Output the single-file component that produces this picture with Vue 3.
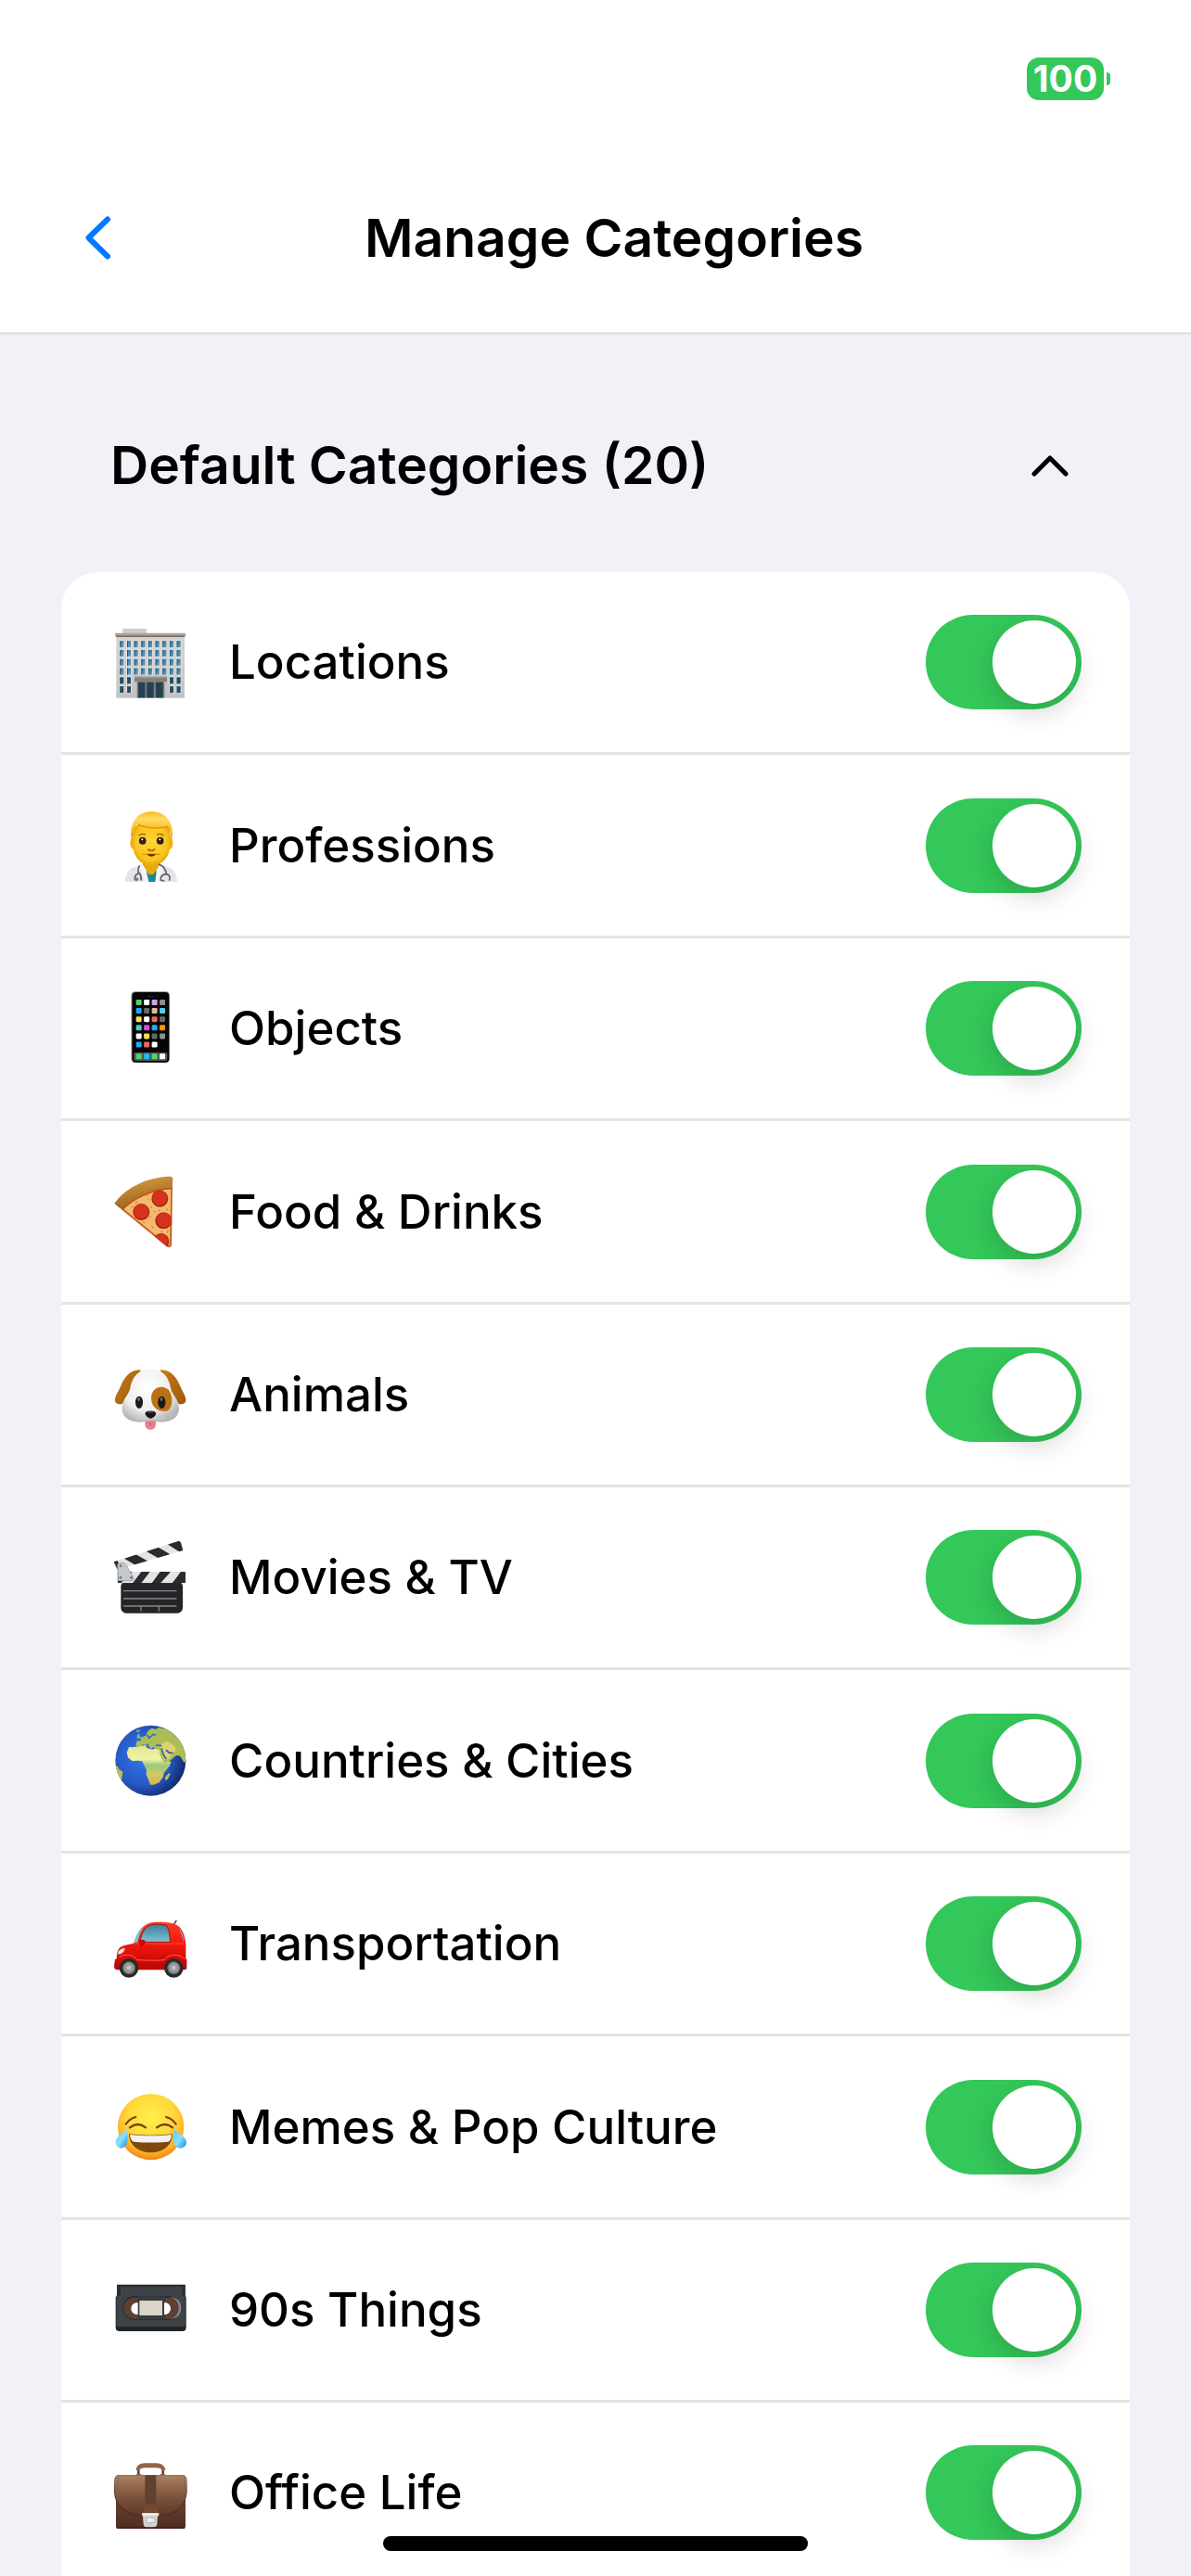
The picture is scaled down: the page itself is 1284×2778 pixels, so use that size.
<template>
  <div class="screen">
    <header class="header">
      <div class="status-bar">
        <div class="battery">
          <span class="level">100</span>
          <span class="cap"></span>
        </div>
      </div>
      <div class="nav">
        <button class="back" type="button" aria-label="Back">
          <svg viewBox="0 0 79 79">
            <path d="M50 19.5 29.5 39.5 50 59.5" />
          </svg>
        </button>
        <h1>Manage Categories</h1>
      </div>
    </header>

    <main class="content">
      <button class="section-header" type="button" :aria-expanded="expanded" @click="expanded = !expanded">
        <span>Default Categories (20)</span>
        <svg viewBox="0 0 66 66" :class="{ closed: !expanded }">
          <path d="M16 42 33 25 50 42" />
        </svg>
      </button>

      <ul v-if="expanded" class="list">
        <li v-for="item in categories" :key="item.id" class="row">
          <svg class="icon" :viewBox="`57 ${item.top} 252 252`" aria-hidden="true">
            <!-- Office building -->
            <g v-if="item.id === 'locations'">
              <defs>
                <linearGradient id="wall" x1="0" x2="0" y1="0" y2="1">
                  <stop offset="0" stop-color="#d9d0c7" />
                  <stop offset=".3" stop-color="#d3d1d0" />
                  <stop offset="1" stop-color="#c3c1c0" />
                </linearGradient>
                <linearGradient id="glass" x1="0" x2="0" y1="0" y2="1">
                  <stop offset="0" stop-color="#3c7fa6" />
                  <stop offset="1" stop-color="#5b9abd" />
                </linearGradient>
              </defs>
              <rect x="97" y="84" width="76" height="17" fill="#cfccca" />
              <rect x="76" y="108" width="221" height="200" fill="url(#wall)" />
              <rect x="72" y="98" width="228" height="9" rx="2" fill="#aaa39e" />
              <rect x="75" y="106" width="223" height="5" fill="#776e69" />
              <template v-for="r in 6" :key="r">
                <template v-for="c in 9" :key="c">
                  <g v-if="r < 5 || c < 3 || c > 7">
                    <rect :x="62 + c * 23" :y="90 + r * 29.4" width="18" height="27" fill="#dedede" />
                    <rect
                      :x="65 + c * 23"
                      :y="94 + r * 29.4"
                      width="12"
                      height="21"
                      :fill="r < 5 ? 'url(#glass)' : '#294a5e'"
                    />
                    <rect :x="65 + c * 23" :y="94 + r * 29.4" width="3" height="21" fill="#255775" />
                  </g>
                </template>
              </template>
              <rect x="135" y="239" width="105" height="17" fill="#85807e" />
              <rect x="135" y="239" width="105" height="4" fill="#a39e9b" />
              <rect x="143" y="256" width="89" height="52" fill="#787b7e" />
              <rect x="147" y="257" width="22" height="50" fill="#25404f" />
              <rect x="175" y="257" width="22" height="50" fill="#25404f" />
              <rect x="204" y="257" width="23" height="50" fill="#25404f" />
            </g>

            <!-- Doctor -->
            <g v-else-if="item.id === 'professions'">
              <defs>
                <radialGradient id="skin" cx=".5" cy=".45" r=".6">
                  <stop offset="0" stop-color="#ffd52e" />
                  <stop offset=".7" stop-color="#fbc41f" />
                  <stop offset="1" stop-color="#dd9a0c" />
                </radialGradient>
                <linearGradient id="hair" x1="0" x2="0" y1="0" y2="1">
                  <stop offset="0" stop-color="#f9bd1d" />
                  <stop offset=".3" stop-color="#ffdc66" />
                  <stop offset=".7" stop-color="#f7b91c" />
                  <stop offset="1" stop-color="#e39c0c" />
                </linearGradient>
              </defs>
              <path d="M104 300c2-28 12-43 34-49l26-10h50l26 10c22 6 31 21 33 49Z" fill="#e3e5ea" />
              <path d="M163 240h52l-6 60h-30Z" fill="#15899a" />
              <path d="M163 228h51v28l-20 21h-11l-20-21Z" fill="#e7a70f" />
              <path d="M160 243 172 260 181 300h-12l-19-48ZM217 243 207 260 202 300h12l15-48Z" fill="#f4f5f8" />
              <ellipse cx="130" cy="174" rx="9" ry="20" fill="#eeae16" />
              <ellipse cx="250" cy="174" rx="9" ry="20" fill="#eeae16" />
              <path d="M130 135c0-38 120-38 120 0v45c0 42-29 68-60 68s-60-26-60-68Z" fill="url(#skin)" />
              <path d="M124 155c-4-52 24-82 66-82s73 30 67 83l-6-1c2-18-2-28-9-34-32 7-74 6-98-10-8 12-13 25-14 44Z" fill="url(#hair)" />
              <path d="M145 113c24 14 65 17 97 8" fill="none" stroke="#ce8708" stroke-width="3" />
              <path d="M148 150q11-9 23-2M207 148q12-7 23 2" fill="none" stroke="#9a610c" stroke-width="4" />
              <ellipse cx="161" cy="167" rx="15" ry="12" fill="#fff1c9" />
              <ellipse cx="218" cy="167" rx="15" ry="12" fill="#fff1c9" />
              <circle cx="161" cy="167" r="12" fill="#3b1d08" />
              <circle cx="218" cy="167" r="12" fill="#3b1d08" />
              <circle cx="160" cy="163" r="3" fill="#fff" />
              <circle cx="217" cy="163" r="3" fill="#fff" />
              <path d="M179 195q10 8 21 0" fill="none" stroke="#b46d0a" stroke-width="5" stroke-linecap="round" />
              <path d="M160 211q29-3 59 0" fill="none" stroke="#d08a0e" stroke-width="3" />
              <path d="M174 211h31q-15 14-31 0Z" fill="#542306" />
              <path d="M151 249c-7 8-3 18-4 24-8 3-12 12-11 20M151 272c5 6 6 14 5 22M215 244c14 4 21 17 24 32M239 275c-14 0-22 9-19 19l10 3M239 275c10 3 12 12 9 19" fill="none" stroke="#5b5e65" stroke-width="5" stroke-linecap="round" />
              <circle cx="142" cy="292" r="6" fill="#7b7f86" />
            </g>

            <!-- Phone -->
            <g v-else-if="item.id === 'objects'">
              <rect x="124" y="57" width="125" height="232" rx="14" fill="#a6a8ac" />
              <rect x="127" y="60" width="120" height="227" rx="12" fill="#050505" />
              <rect x="177" y="71" width="20" height="5" rx="2" fill="#202226" />
              <circle cx="207" cy="73" r="3" fill="#17202a" />
              <rect x="133" y="255" width="108" height="27" rx="6" fill="#555" />
              <template v-for="(line, r) in phoneApps" :key="r">
                <rect
                  v-for="(color, c) in line"
                  :key="c"
                  :x="140 + c * 25.4"
                  :y="r === 6 ? 259 : 84 + r * 27.3"
                  width="18"
                  height="18"
                  rx="4"
                  :fill="color"
                />
              </template>
            </g>

            <!-- Pizza slice -->
            <g v-else-if="item.id === 'food'">
              <defs>
                <linearGradient id="crust" x1="0" x2=".4" y1="0" y2="1">
                  <stop offset="0" stop-color="#d9a34a" />
                  <stop offset=".5" stop-color="#bd8332" />
                  <stop offset="1" stop-color="#985b1b" />
                </linearGradient>
                <clipPath id="slice">
                  <path d="M93 174C130 133 190 106 256 102l-3 188q-4 12-13 5Z" />
                </clipPath>
              </defs>
              <path d="M91 173C130 128 195 98 258 98l-3 192q-5 13-16 5Z" fill="#c65d20" />
              <path d="M96 170C134 132 192 109 253 106l-4 182q-3 6-8 1Z" fill="#f3bb6e" />
              <g clip-path="url(#slice)">
                <path d="M93 176c44-44 98-66 162-71" fill="none" stroke="#c94716" stroke-width="7" />
                <path d="M139 156l3-6M179 143l3 1M188 165l2 4M183 202l3-5M192 230l4 4M188 249l3 1M164 216l4 2M240 174l3 4M214 180l3-3M221 246l4 2M243 243l-2 7M200 182l2 1M174 131l5-2M126 165l6 3" stroke="#d9883e" stroke-width="4" stroke-linecap="round" />
                <g fill="#a9230e">
                  <circle cx="157" cy="183" r="27" />
                  <circle cx="217" cy="140" r="27" />
                  <circle cx="229" cy="211" r="27" />
                  <circle cx="221" cy="278" r="26" />
                </g>
                <g fill="#d5321d">
                  <circle cx="157" cy="181" r="24" />
                  <circle cx="217" cy="138" r="24" />
                  <circle cx="230" cy="209" r="24" />
                  <circle cx="220" cy="277" r="23" />
                </g>
              </g>
              <path d="M70 155C106 104 179 69 250 68q10 1 9 11l-2 25C191 108 136 133 96 174q-12-4-26-19Z" fill="url(#crust)" />
            </g>

            <!-- Dog face -->
            <g v-else-if="item.id === 'animals'">
              <defs>
                <radialGradient id="fur" cx=".45" cy=".35" r=".65">
                  <stop offset="0" stop-color="#fff" />
                  <stop offset=".65" stop-color="#efefef" />
                  <stop offset="1" stop-color="#b9b8b7" />
                </radialGradient>
                <linearGradient id="ear" x1="0" x2="1" y1="0" y2="1">
                  <stop offset="0" stop-color="#c77b18" />
                  <stop offset="1" stop-color="#9e5809" />
                </linearGradient>
              </defs>
              <path d="M155 96c-35-2-53 24-66 55-8 19-17 28-17 43 0 10 9 14 20 13l26-12Z" fill="url(#ear)" />
              <path d="M218 96c35-2 53 24 66 55 8 19 17 28 17 43 0 10-9 14-20 13l-26-12Z" fill="url(#ear)" />
              <path d="M169 259h35v12c0 24-35 24-35 0Z" fill="#ee7c91" />
              <path d="M186 265v13" stroke="#cf536d" stroke-width="3" />
              <path d="M187 93c38 0 59 26 65 62 4 22 27 35 27 65 0 31-25 45-57 45-13 0-24-5-35-5s-22 5-35 5c-32 0-57-14-57-45 0-30 22-43 26-65 6-36 28-62 66-62Z" fill="url(#fur)" />
              <path d="M222 151c23 0 34 20 34 43 0 22-9 36-24 36-25 0-43-18-43-43 0-21 13-36 33-36Z" fill="#bb7113" />
              <path d="M137 250q31 13 49-7 18 20 51 7" fill="none" stroke="#d4d2d0" stroke-width="3" />
              <g fill="#191919">
                <ellipse cx="150" cy="201" rx="12" ry="20" />
                <ellipse cx="223" cy="201" rx="12" ry="20" />
              </g>
              <g fill="#747474">
                <ellipse cx="149" cy="191" rx="4" ry="6" />
                <ellipse cx="222" cy="191" rx="4" ry="6" />
              </g>
              <path d="M170 235c3-9 30-9 34 0 2 8-10 18-17 18s-19-10-17-18Z" fill="#171514" />
              <path d="M178 234q9-4 17 0" stroke="#6d6a68" stroke-width="3" fill="none" />
            </g>

            <!-- Clapper board -->
            <g v-else-if="item.id === 'movies'">
              <defs>
                <clipPath id="clap">
                  <path d="M68 133 277 66q6-1 8 5l7 25-212 62Z" />
                </clipPath>
                <clipPath id="bar">
                  <rect x="80" y="165" width="220" height="37" rx="3" />
                </clipPath>
              </defs>
              <rect x="91" y="196" width="200" height="103" rx="17" fill="#242526" />
              <g clip-path="url(#clap)">
                <path d="M60 130 290 50 300 105 70 165Z" fill="#e4e4e6" />
                <path d="M60 125h19l15 40H70ZM102 122l37-13 43 24-37 15ZM172 98l38-13 43 25-37 13ZM241 76l42-14 20 38-20 2Z" fill="#2a2b2d" />
              </g>
              <g clip-path="url(#bar)">
                <path d="M80 165h220v37H80Z" fill="#2a2b2d" />
                <path d="M128 165h29l-28 37h-38ZM185 165h33l-27 37h-34ZM252 165h33l-28 37h-38Z" fill="#e4e4e6" />
              </g>
              <path d="M80 140 94 136q9-1 14 7l22 38q8 14-10 13H82Z" fill="#c3c8cc" stroke="#888e92" stroke-width="2" />
              <g fill="#6c7276">
                <circle cx="90" cy="146" r="4" />
                <circle cx="90" cy="184" r="4" />
                <circle cx="125" cy="184" r="4" />
              </g>
              <path d="M99 227h172M99 252h172M99 276h172M156 276v17M214 276v17" stroke="#85878a" stroke-width="4" />
            </g>

            <!-- Globe -->
            <g v-else-if="item.id === 'countries'">
              <defs>
                <radialGradient id="sea" cx=".38" cy=".45" r=".62">
                  <stop offset="0" stop-color="#3476e6" />
                  <stop offset=".65" stop-color="#2557c4" />
                  <stop offset="1" stop-color="#142a6e" />
                </radialGradient>
                <linearGradient id="land" x1="0" x2="0" y1="0" y2="1">
                  <stop offset="0" stop-color="#e5e596" />
                  <stop offset=".35" stop-color="#eff3a4" />
                  <stop offset=".5" stop-color="#9bca7c" />
                  <stop offset=".75" stop-color="#cfc963" />
                  <stop offset="1" stop-color="#d9b151" />
                </linearGradient>
                <clipPath id="globe">
                  <circle cx="187" cy="174" r="114" />
                </clipPath>
              </defs>
              <circle cx="187" cy="174" r="114" fill="url(#sea)" />
              <g clip-path="url(#globe)">
                <path d="M130 131 154 126 170 125l4 8 19 5 10-4 18 1 9 23 15 18 8 2-4 13-19 23-2 12-13 19-17 7h-12l-5-13-8-20 1-15-9-17-5-11-15-2-17 2-14-12-4-16 7-18Z" fill="url(#land)" />
                <path d="M235 226l12-12 4 3-9 18-8 2Z" fill="#bfc15d" />
                <path d="M139 121l5-11h13l-4-10 19-7 6-15 13-9 13 4 9-6 27 5 29 15 33 40 6 39-12 15-14-22-11-2-7 5-17 15-16 5-14-27-2-16-14-4-5-6-5 7-8-5-4-12-6 3 4 12-11-13-13 6-9 5Z" fill="#acbd58" />
                <path d="M218 124l21-13 22 12 9 15-7 11-18 20-13 3-13-31Z" fill="#dfd16d" />
                <path d="M222 134q5 22 16 35M237 140q11 13 23 9" fill="none" stroke="#235bb8" stroke-width="5" />
                <path d="M176 91l6 10 14-12 8 3M204 124l19 2" fill="none" stroke="#326bbb" stroke-width="5" />
                <path d="M145 103l-3-8 7-10 3 7 5 10ZM140 77l10-3 3 5-10 3Z" fill="#82b575" />
                <path d="M68 188l13 5 4 9 12 8-3 22-7 11-19-10Z" fill="#b6c250" />
              </g>
            </g>

            <!-- Car -->
            <g v-else-if="item.id === 'transportation'">
              <defs>
                <linearGradient id="paint" x1="0" x2="0" y1="0" y2="1">
                  <stop offset="0" stop-color="#ff3a25" />
                  <stop offset=".45" stop-color="#f5170d" />
                  <stop offset="1" stop-color="#b70505" />
                </linearGradient>
                <linearGradient id="window" x1="0" x2="0" y1="0" y2="1">
                  <stop offset="0" stop-color="#358198" />
                  <stop offset="1" stop-color="#83c2d1" />
                </linearGradient>
              </defs>
              <path d="M262 121l8-12" stroke="#333" stroke-width="4" stroke-linecap="round" />
              <path d="M71 239q0-6 6-7l2-20q3-21 33-25l20-5c14-37 33-67 66-68 29-2 58 0 74 9 19 11 26 34 29 62v46q5 3 3 15v17q-1 5-10 5H77q-8-2-8-12Z" fill="url(#paint)" />
              <path d="M152 178c7-34 19-54 45-57 14-1 28 0 42 4 8 13 11 35 11 53Z" fill="url(#window)" stroke="#9f1714" stroke-width="3" />
              <path d="M133 180c7-27 18-45 33-55-12 19-18 37-21 54Z" fill="#80c2cf" />
              <path d="M280 132q14 20 15 48-7-18-15-48Z" fill="#65b4ce" />
              <path d="M144 236q62 3 88 0M86 227c15-12 45-10 58 9M232 236c13-20 46-22 66-3" fill="none" stroke="#ff6149" stroke-width="3" />
              <path d="M133 183h162" stroke="#ff6b54" stroke-width="2" />
              <path d="M149 175q2-6 10-5 11 0 11 7 0 12-10 12l-1 6-6-7q-5-3-4-13Z" fill="#c60c08" />
              <path d="M80 217q3-18 24-20-1 15-16 20Z" fill="#f5e7df" stroke="#d1725c" stroke-width="2" />
              <g v-for="x in [117, 262]" :key="x">
                <circle :cx="x" cy="262" r="31" fill="#292929" />
                <circle :cx="x" cy="262" r="21" fill="#6a6a6a" />
                <circle :cx="x" cy="261" r="17" fill="#999" />
                <circle :cx="x" cy="261" r="7" fill="#c3c3c3" />
              </g>
            </g>

            <!-- Laughing face -->
            <g v-else-if="item.id === 'memes'">
              <defs>
                <radialGradient id="face" cx=".5" cy=".35" r=".65">
                  <stop offset="0" stop-color="#fff04b" />
                  <stop offset=".55" stop-color="#ffd73a" />
                  <stop offset=".85" stop-color="#fbad25" />
                  <stop offset="1" stop-color="#e98516" />
                </radialGradient>
                <linearGradient id="tear" x1="0" x2="1" y1="0" y2="1">
                  <stop offset="0" stop-color="#58c3f7" />
                  <stop offset=".5" stop-color="#8be0ff" />
                  <stop offset="1" stop-color="#168ddc" />
                </linearGradient>
              </defs>
              <circle cx="188" cy="173" r="107" fill="url(#face)" />
              <g fill="none" stroke="#7a3e0c" stroke-width="7" stroke-linecap="round">
                <path d="M107 164q12-18 32-23M237 141q20 5 32 23" stroke-width="6" />
                <path d="M120 175q26-20 51 0M207 175q26-20 51 0" />
              </g>
              <path d="M117 196q70 8 141 0c-1 36-29 60-70 60s-70-24-71-60Z" fill="#81470d" />
              <path d="M120 198q68 8 135 0-1 21-12 23-55 5-111 0-10-4-12-23Z" fill="#f1f2f5" />
              <path d="M111 180c-2 15 4 25 1 41-6 30-38 25-38 2 0-19 21-27 37-43Z" fill="url(#tear)" />
              <path d="M262 180c2 15-4 25-1 41 6 30 42 25 42 2 0-19-25-27-41-43Z" fill="url(#tear)" />
            </g>

            <!-- Video cassette -->
            <g v-else-if="item.id === 'nineties'">
              <path d="M78 100h221v34l3 8v97q0 12-12 12H86q-12 0-12-12v-97l4-8Z" fill="#222426" />
              <path d="M81 104h215v31l3 9v82q0 12-9 12H85q-9 0-9-12v-83l5-9Z" fill="#3e4347" />
              <path d="M78 101h221v7H90v28H78ZM289 108h10v28h-10Z" fill="#2b2e31" />
              <rect x="97" y="138" width="190" height="76" rx="38" fill="#24272a" />
              <path d="M146 142h-12a34 34 0 0 0 0 69h12Z" fill="#5c4034" />
              <path d="M232 142h18a34 34 0 0 1 0 69h-18Z" fill="#5c4034" />
              <path d="M250 141q28 6 28 35t-28 35q36-2 36-35t-36-35Z" fill="#85888a" />
              <path d="M146 158a19 19 0 0 0 0 39ZM232 158a19 19 0 0 1 0 39Z" fill="#fff" />
              <rect x="144" y="138" width="89" height="75" fill="#363b3f" />
              <path d="M146 159q-22 1-22 19t22 19ZM231 159q20 1 20 19t-20 19Z" fill="#fff" />
              <rect x="151" y="152" width="74" height="48" fill="#d9d5c7" />
              <path d="M77 239h220" stroke="#17191a" stroke-width="3" />
            </g>

            <!-- Briefcase -->
            <g v-else>
              <defs>
                <linearGradient id="leather" x1="0" x2="0" y1="0" y2="1">
                  <stop offset="0" stop-color="#ac8162" />
                  <stop offset=".5" stop-color="#80573f" />
                  <stop offset="1" stop-color="#5d392a" />
                </linearGradient>
                <linearGradient id="case" x1="0" x2="0" y1="0" y2="1">
                  <stop offset="0" stop-color="#7e563d" />
                  <stop offset="1" stop-color="#4e2c20" />
                </linearGradient>
              </defs>
              <path d="M148 716v-13q0-14 14-15h49q15 1 16 15v13" fill="none" stroke="#4c2d20" stroke-width="7" />
              <path d="M140 702q1-22 29-23h36q27 1 30 23l-10 2q-4-10-20-10h-35q-17 0-20 10Z" fill="#946548" />
              <path d="M141 714h16v7h-16ZM218 714h16v7h-16Z" fill="#7f6959" />
              <rect x="75" y="718" width="225" height="173" rx="9" fill="url(#case)" />
              <path d="M82 718h210q12 2 12 15l1 35c0 48-38 84-88 84h-60c-50 0-88-36-88-84l1-35q1-13 12-15Z" fill="#513021" />
              <path d="M82 718h210q11 2 12 15v32c0 46-37 81-87 81h-60c-50 0-86-35-86-81v-32q1-13 11-15Z" fill="url(#leather)" />
              <path d="M82 725q-5 25-3 45M295 725q5 25 3 45" fill="none" stroke="#6b4330" stroke-width="2" stroke-dasharray="4 4" />
              <path d="M169 718h36v126h-36Z" fill="#61402f" />
              <path d="M162 836q1-24 24-25 25 1 25 25v10h-49Z" fill="#75482f" />
              <path d="M159 840h55v10h-4l-2 27q-2 10-12 10h-20q-10 0-12-10l-2-27h-3Z" fill="#d2d2d2" />
              <path d="M162 842h49v6h-49Z" fill="#f1f1f1" />
              <rect x="173" y="855" width="27" height="17" rx="7" fill="#ededed" stroke="#9f9f9f" stroke-width="2" />
              <path d="M77 888h221" stroke="#3e211a" stroke-width="5" />
            </g>
          </svg>
          <label class="name" :for="item.id">{{ item.name }}</label>
          <input :id="item.id" v-model="item.enabled" class="switch" type="checkbox" role="switch" />
        </li>
      </ul>
    </main>

    <div class="home-indicator"></div>
  </div>
</template>

<script setup>
import { ref } from 'vue'

const expanded = ref(true)

// top is the upper edge of each drawing's viewBox
const categories = ref([
  { id: 'locations', name: 'Locations', top: 66, enabled: true },
  { id: 'professions', name: 'Professions', top: 57, enabled: true },
  { id: 'objects', name: 'Objects', top: 51, enabled: true },
  { id: 'food', name: 'Food & Drinks', top: 57, enabled: true },
  { id: 'animals', name: 'Animals', top: 50, enabled: true },
  { id: 'movies', name: 'Movies & TV', top: 57, enabled: true },
  { id: 'countries', name: 'Countries & Cities', top: 49, enabled: true },
  { id: 'transportation', name: 'Transportation', top: 57, enabled: true },
  { id: 'memes', name: 'Memes & Pop Culture', top: 48, enabled: true },
  { id: 'nineties', name: '90s Things', top: 56, enabled: true },
  { id: 'office', name: 'Office Life', top: 648, enabled: true }
])

const phoneApps = [
  ['#4bd964', '#fff', '#df9cf0', '#8e8e93'],
  ['#1badf8', '#68686b', '#d9bd98', '#4dd0ee'],
  ['#fbe04d', '#fff', '#f8625a', '#68686b'],
  ['#45d0d6', '#dc4ad8', '#1badf8', '#ff9500'],
  ['#fff', '#fbe04d', '#68686b', '#8e8e93'],
  ['#1badf8', '#f8625a', '#fff'],
  ['#4bd964', '#12c3f8', '#4bd964', '#fff']
]
</script>

<style>
body {
  margin: 0;
  background: #f2f1f7;
}
</style>

<style scoped>
.screen {
  height: 100vh;
  overflow: hidden;
  display: flex;
  flex-direction: column;
  background: #f2f1f7;
  color: #000;
  font-family: Inter, 'Liberation Sans', sans-serif;
}

button {
  padding: 0;
  border: 0;
  background: none;
  color: inherit;
  font-family: inherit;
  cursor: pointer;
}

svg {
  display: block;
  flex: none;
}

.header {
  flex: none;
  background: #fff;
  border-bottom: 3px solid #e3e2e7;
}

.status-bar {
  display: flex;
  justify-content: flex-end;
  padding: 62px 87px 0;
}

.battery {
  display: flex;
  align-items: center;
  gap: 3px;
}

.level {
  width: 83px;
  border-radius: 13px;
  background: #34c759;
  color: #fff;
  font-size: 39px;
  font-weight: 700;
  line-height: 46px;
  text-align: center;
}

.cap {
  width: 4px;
  height: 14px;
  border-radius: 0 4px 4px 0;
  background: #34c759;
}

.nav {
  display: flex;
  align-items: center;
  padding: 109px 105px 62px 66px;
}

.back svg {
  width: 79px;
  height: 79px;
}

.back path {
  fill: none;
  stroke: #007aff;
  stroke-width: 6;
  stroke-linecap: round;
  stroke-linejoin: round;
}

h1 {
  flex: 1;
  margin: 0;
  font-size: 57px;
  font-weight: 600;
  line-height: 72px;
  text-align: center;
}

.content {
  flex: 1;
  min-height: 0;
  overflow: hidden;
  padding: 66px 66px 0;
}

.section-header {
  width: 100%;
  height: 150px;
  margin-bottom: 40px;
  padding: 0 53px;
  display: flex;
  align-items: center;
  justify-content: space-between;
  font-size: 57px;
  font-weight: 600;
  line-height: 72px;
}

.section-header svg {
  width: 66px;
  height: 66px;
}

.section-header svg.closed {
  transform: rotate(180deg);
}

.section-header path {
  fill: none;
  stroke: #000;
  stroke-width: 5;
  stroke-linecap: round;
  stroke-linejoin: round;
}

.list {
  display: grid;
  grid-auto-rows: 197px 198px 197px 198px 197px;
  margin: 0;
  padding: 0;
  border-radius: 40px 40px 0 0;
  background: #fff;
  list-style: none;
}

.row {
  display: flex;
  align-items: center;
  padding: 0 52px 0 53px;
  border-bottom: 3px solid #e4e4e4;
}

.icon {
  width: 84px;
  height: 84px;
}

.name {
  flex: 1;
  margin-left: 44px;
  font-size: 51px;
  font-weight: 500;
  line-height: 64px;
}

.switch {
  appearance: none;
  flex: none;
  width: 168px;
  height: 102px;
  margin: 0;
  padding: 6px;
  box-sizing: border-box;
  display: flex;
  border-radius: 51px;
  background: #e9e9ea;
  cursor: pointer;
}

.switch::before {
  content: '';
  width: 90px;
  height: 90px;
  border-radius: 50%;
  background: #fff;
  box-shadow: 0 10px 28px rgba(0, 0, 0, 0.16);
}

.switch:checked {
  justify-content: flex-end;
  background: #34c759;
}

.home-indicator {
  position: fixed;
  bottom: 27px;
  left: 50%;
  width: 458px;
  height: 16px;
  border-radius: 8px;
  background: #000;
  transform: translateX(-50%);
}
</style>
